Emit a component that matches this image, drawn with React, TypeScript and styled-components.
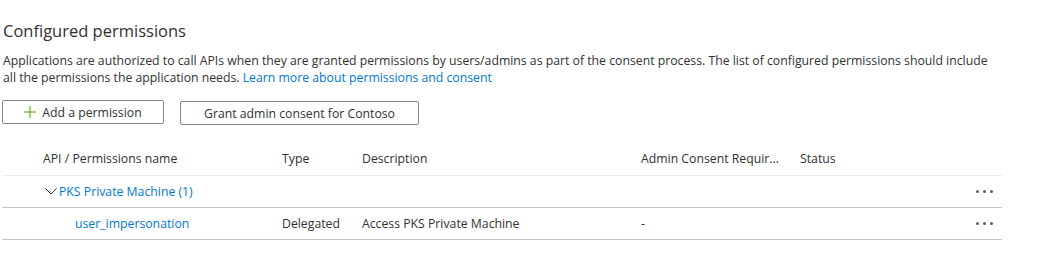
import styled, { createGlobalStyle } from 'styled-components'

const GlobalStyle = createGlobalStyle`
  body {
    margin: 0;
    background: #ffffff;
    font-family: 'Open Sans', 'Noto Sans', sans-serif;
    color: #323130;
  }
`

type Perm = {
  name: string
  type: string
  description: string
  adminConsent: string
  status: string
}

const groups: { api: string; perms: Perm[] }[] = [
  {
    api: 'PKS Private Machine',
    perms: [
      {
        name: 'user_impersonation',
        type: 'Delegated',
        description: 'Access PKS Private Machine',
        adminConsent: '-',
        status: '',
      },
    ],
  },
]

export default function App() {
  return (
    <Page>
      <GlobalStyle />
      <Title>Configured permissions</Title>
      <Intro>
        Applications are authorized to call APIs when they are granted
        permissions by users/admins as part of the consent process. The list of
        configured permissions should include all the permissions the
        application needs. <Link href='#'>Learn more about permissions and consent</Link>
      </Intro>
      <Toolbar>
        <Button $width={162}>
          <PlusIcon viewBox='0 0 12 12' aria-hidden='true'>
            <path d='M6 0v12M0 6h12' />
          </PlusIcon>
          Add a permission
        </Button>
        <Button $width={239}>Grant admin consent for Contoso</Button>
      </Toolbar>
      <Table>
        <HeaderRow>
          <Cell $indent={41}>API / Permissions name</Cell>
          <Cell>Type</Cell>
          <Cell>Description</Cell>
          <Cell>Admin Consent Requir...</Cell>
          <Cell>Status</Cell>
          <Cell />
        </HeaderRow>
        {groups.map((g) => (
          <div key={g.api}>
            <Row>
              <GroupCell>
                <Chevron viewBox='0 0 12 7' aria-hidden='true'>
                  <path d='M0.5 0.5 6 6 11.5 0.5' />
                </Chevron>
                <LinkText>
                  {g.api} ({g.perms.length})
                </LinkText>
              </GroupCell>
              <More>
                <Dot />
                <Dot />
                <Dot />
              </More>
            </Row>
            {g.perms.map((p) => (
              <Row key={p.name}>
                <Cell $indent={73}>
                  <LinkText>{p.name}</LinkText>
                </Cell>
                <Cell>{p.type}</Cell>
                <Cell>{p.description}</Cell>
                <Cell>{p.adminConsent}</Cell>
                <Cell>{p.status}</Cell>
                <More>
                  <Dot />
                  <Dot />
                  <Dot />
                </More>
              </Row>
            ))}
          </div>
        ))}
      </Table>
    </Page>
  )
}

const Page = styled.div`
  padding: 20px 0 0 2px;
  width: 1040px;
  height: 266px;
  box-sizing: border-box;
`

const Title = styled.h2`
  margin: 0 0 0 1px;
  font-size: 16.5px;
  font-weight: 400;
  line-height: 22px;
  color: #323130;
`

const Intro = styled.p`
  margin: 10px 0 0 1px;
  font-size: 12.25px;
  line-height: 17px;
  color: #323130;
  width: 1000px;
`

const Link = styled.a`
  color: #0078d4;
  text-decoration: none;
`

const LinkText = styled.span`
  color: #0078d4;
`

const Toolbar = styled.div`
  display: flex;
  align-items: flex-start;
  gap: 16px;
  margin-top: 14px;
`

const Button = styled.button<{ $width: number }>`
  display: inline-flex;
  align-items: center;
  justify-content: center;
  gap: 6px;
  width: ${({ $width }) => $width}px;
  height: 24px;
  padding: 0;
  background: #ffffff;
  border: 1px solid #8a8886;
  border-radius: 2px;
  font-family: inherit;
  font-size: 12.25px;
  color: #323130;
  & + & {
    margin-top: 1px;
  }
`

const PlusIcon = styled.svg`
  width: 12px;
  height: 12px;
  fill: none;
  stroke: #57a300;
  stroke-width: 1;
`

const Table = styled.div`
  margin-top: 17px;
  width: 1000px;
  font-size: 12.25px;
`

const columns = '280px 80px 279px 159px 1fr 40px'

const HeaderRow = styled.div`
  display: grid;
  grid-template-columns: ${columns};
  align-items: center;
  height: 33px;
  border-bottom: 1px solid #edebe9;
  color: #323130;
`

const Row = styled.div`
  display: grid;
  grid-template-columns: ${columns};
  align-items: center;
  height: 31px;
  border-bottom: 1px solid #c8c6c4;
`

const Cell = styled.div<{ $indent?: number }>`
  padding-left: ${({ $indent }) => $indent ?? 0}px;
  white-space: nowrap;
  overflow: hidden;
`

const GroupCell = styled.div`
  grid-column: 1 / 6;
  display: flex;
  align-items: center;
  gap: 2px;
  padding-left: 43px;
`

const Chevron = styled.svg`
  width: 12px;
  height: 7px;
  fill: none;
  stroke: #323130;
  stroke-width: 1;
`

const More = styled.div`
  grid-column: 6;
  display: flex;
  gap: 4px;
  align-items: center;
  padding-left: 14px;
`

const Dot = styled.span`
  width: 3px;
  height: 3px;
  border-radius: 50%;
  background: #605e5c;
`
